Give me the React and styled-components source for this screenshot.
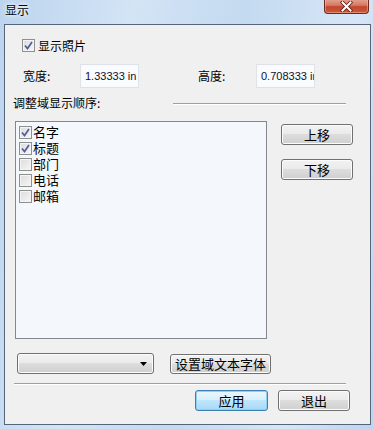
import React from 'react'
import styled, { createGlobalStyle } from 'styled-components'

const FONT = '"Noto Sans CJK SC", "Liberation Sans", sans-serif'

const GlobalStyle = createGlobalStyle`
  html, body {
    margin: 0;
    padding: 0;
    background: #c6dbf1;
  }
  body {
    font-family: ${FONT};
    font-size: 12px;
    line-height: 14px;
    color: #000;
  }
`

/* window frame */
const Frame = styled.div`
  width: 373px;
  height: 429px;
  display: flex;
  flex-direction: column;
  background: linear-gradient(100deg, #bcd4ee 0%, #d3e4f5 30%, #c4daf0 55%, #d6e6f6 80%, #bdd5ee 100%);
  overflow: hidden;
`

const TitleBar = styled.div`
  height: 24px;
  flex: none;
  display: flex;
  align-items: flex-start;
  justify-content: space-between;
`

const Title = styled.div`
  padding: 2px 0 0 5px;
  font-size: 12px;
  line-height: 16px;
  text-shadow: 0 0 6px #fff, 0 0 3px #fff;
`

const CloseButton = styled.div`
  width: 45px;
  height: 15px;
  margin: -1px 4px 0 0;
  box-sizing: border-box;
  border: 1px solid #6d2a22;
  border-top: none;
  border-radius: 0 0 4px 4px;
  background: linear-gradient(#e4a493 0%, #d47a62 45%, #c2462d 55%, #cc5a3a 100%);
  box-shadow: inset 0 0 0 1px rgba(255, 200, 180, 0.45);
  display: flex;
  align-items: center;
  justify-content: center;
`

const Client = styled.div`
  flex: none;
  height: 401px;
  margin: 0 2px 4px 4px;
  box-sizing: border-box;
  border: 1px solid #56667a;
  background: #f0f0f0;
  display: flex;
  flex-direction: column;
`

/* common parts */
const Box = styled.span`
  width: ${p => p.size}px;
  height: ${p => p.size}px;
  flex: none;
  box-sizing: border-box;
  border: 1px solid #8e8f8f;
  background: linear-gradient(135deg, #dcdcdc, #f6f6f6);
  box-shadow: inset 0 0 0 1px #f4f4f4;
  display: flex;
  align-items: center;
  justify-content: center;
`

const Check = ({ checked, size = 13 }) => (
  <Box size={size}>
    {checked && (
      <svg width="9" height="9" viewBox="0 0 9 9">
        <path d="M1 4.5 L3.5 7.5 L8 1" fill="none" stroke="#4d5f9a" strokeWidth="1.7" />
      </svg>
    )}
  </Box>
)

const Button = styled.div`
  width: ${p => p.w}px;
  height: ${p => p.h || 21}px;
  flex: none;
  box-sizing: border-box;
  border: 1px solid ${p => (p.primary ? '#3c7fb1' : '#707070')};
  border-radius: 3px;
  background: ${p =>
    p.primary
      ? 'linear-gradient(#eaf6fd 0%, #d9f0fc 45%, #bee6fd 50%, #a7d9f5 100%)'
      : 'linear-gradient(#f2f2f2 0%, #ebebeb 45%, #dddddd 50%, #cfcfcf 100%)'};
  box-shadow: inset 0 0 0 1px ${p => (p.primary ? '#8fd0f5' : '#fcfcfc')};
  display: flex;
  align-items: center;
  justify-content: center;
  font-size: 13px;
  line-height: 1;
`

/* rows */
const PhotoRow = styled.div`
  display: flex;
  align-items: center;
  gap: 3px;
  margin: 14px 0 0 17px;
  height: 13px;
  font-size: 12px;
`

const SizeRow = styled.div`
  display: flex;
  align-items: center;
  height: 24px;
  margin: 12px 0 0 18px;
`

const Label = styled.div`
  width: ${p => p.w}px;
  flex: none;
  font-size: 12px;
`

const Field = styled.div`
  width: 59px;
  height: 24px;
  flex: none;
  box-sizing: border-box;
  border: 1px solid #dfe3e8;
  background: #f9fbfe;
  font-family: "Liberation Sans", sans-serif;
  font-size: 11px;
  line-height: 22px;
  padding-left: 4px;
  white-space: nowrap;
  overflow: hidden;
  color: #101030;
`

const OrderHeader = styled.div`
  display: flex;
  align-items: center;
  height: 14px;
  margin: 8px 0 0 8px;
  font-size: 12px;
`

const Rule = styled.div`
  width: 173px;
  height: 1px;
  margin: 2px 24px 0 auto;
  background: #a0a0a0;
  border-bottom: 1px solid #ffffff;
`

const Middle = styled.div`
  display: flex;
  align-items: flex-start;
  gap: 14px;
  margin: 11px 0 0 10px;
`

const ListBox = styled.div`
  width: 252px;
  height: 218px;
  box-sizing: border-box;
  border: 1px solid #828790;
  background: #f4f8fc;
  padding: 2px 0 0 3px;
`

const ListItem = styled.div`
  display: flex;
  align-items: center;
  gap: 1px;
  height: 16px;
`

const ItemText = styled.div`
  font-family: "Liberation Sans", "Noto Sans CJK SC", sans-serif;
  font-size: 13px;
  line-height: 15px;
  padding-top: 1px;
`

const SideButtons = styled.div`
  display: flex;
  flex-direction: column;
  gap: 14px;
  padding-top: 3px;
`

const BottomRow = styled.div`
  display: flex;
  align-items: center;
  gap: 16px;
  margin: 14px 0 0 12px;
  height: 21px;
`

const Dropdown = styled(Button)`
  justify-content: flex-end;
  padding-right: 6px;
`

const Separator = styled.div`
  width: 332px;
  height: 1px;
  margin: 9px 0 0 9px;
  background: #a0a0a0;
  border-bottom: 1px solid #ffffff;
`

const ActionRow = styled.div`
  display: flex;
  gap: 10px;
  margin: 5px 0 0 190px;
`

const items = [
  { name: '名字', checked: true },
  { name: '标题', checked: true },
  { name: '部门', checked: false },
  { name: '电话', checked: false },
  { name: '邮箱', checked: false }
]

export default function App() {
  return (
    <Frame>
      <GlobalStyle />
      <TitleBar>
        <Title>显示</Title>
        <CloseButton>
          <svg width="13" height="11" viewBox="0 0 13 11">
            <path d="M2.5 1.5 L10.5 9.5 M10.5 1.5 L2.5 9.5" stroke="#5a1a12" strokeWidth="3.6" strokeLinecap="square" />
            <path d="M2.5 1.5 L10.5 9.5 M10.5 1.5 L2.5 9.5" stroke="#ffffff" strokeWidth="2" strokeLinecap="square" />
          </svg>
        </CloseButton>
      </TitleBar>
      <Client>
        <PhotoRow>
          <Check checked />
          <span>显示照片</span>
        </PhotoRow>
        <SizeRow>
          <Label w={57}>宽度:</Label>
          <Field>1.33333 in</Field>
          <Label w={59} />
          <Label w={58}>高度:</Label>
          <Field>0.708333 in</Field>
        </SizeRow>
        <OrderHeader>
          <span>调整域显示顺序:</span>
          <Rule />
        </OrderHeader>
        <Middle>
          <ListBox>
            {items.map(item => (
              <ListItem key={item.name}>
                <Check checked={item.checked} />
                <ItemText>{item.name}</ItemText>
              </ListItem>
            ))}
          </ListBox>
          <SideButtons>
            <Button w={72}>上移</Button>
            <Button w={72}>下移</Button>
          </SideButtons>
        </Middle>
        <BottomRow>
          <Dropdown w={137}>
            <svg width="7" height="4" viewBox="0 0 7 4">
              <path d="M0 0 H7 L3.5 4 Z" fill="#000" />
            </svg>
          </Dropdown>
          <Button w={101} h={20}>设置域文本字体</Button>
        </BottomRow>
        <Separator />
        <ActionRow>
          <Button w={73} primary>应用</Button>
          <Button w={72}>退出</Button>
        </ActionRow>
      </Client>
    </Frame>
  )
}
